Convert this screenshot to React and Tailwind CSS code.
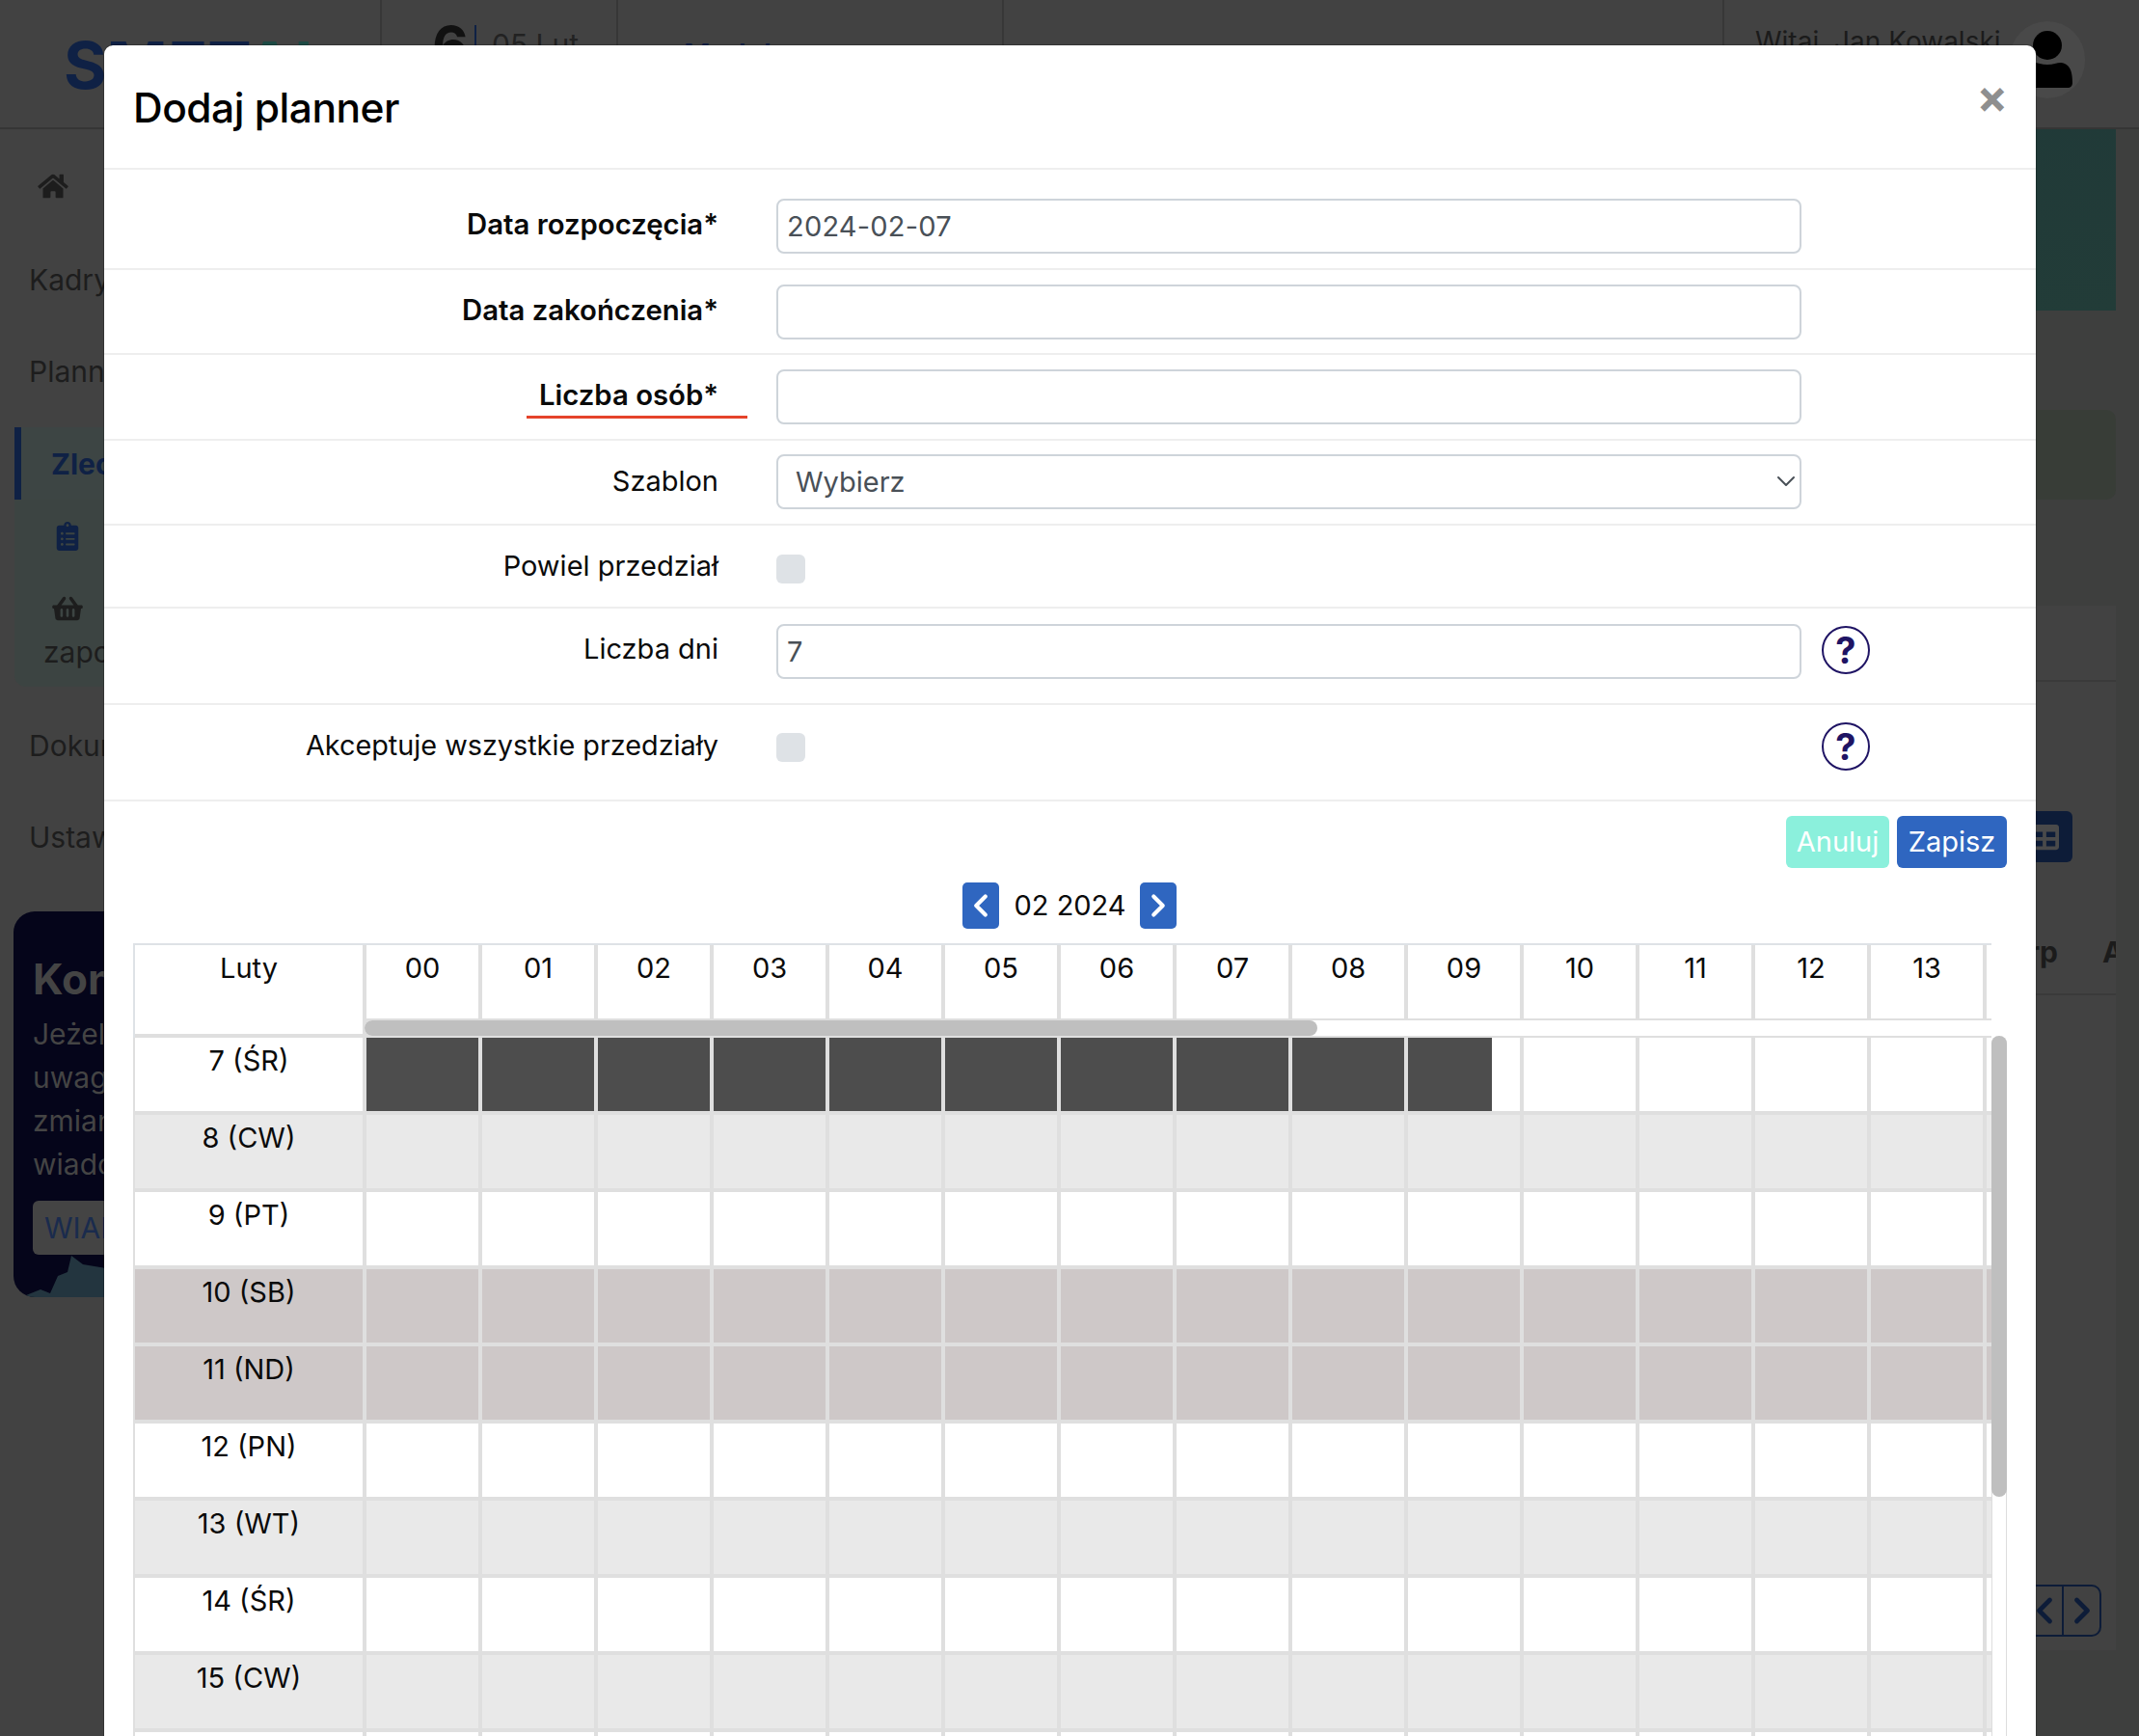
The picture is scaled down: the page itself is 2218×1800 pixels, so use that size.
import { FaHome, FaClipboardList, FaShoppingBasket, FaTable } from 'react-icons/fa';
import { FiChevronDown, FiChevronLeft, FiChevronRight } from 'react-icons/fi';

const HOURS = ['00', '01', '02', '03', '04', '05', '06', '07', '08', '09', '10', '11', '12', '13', '14'];

const DAYS = [
  { label: '7 (ŚR)', bg: 'bg-white', busy: true },
  { label: '8 (CW)', bg: 'bg-[#e9e9e9]' },
  { label: '9 (PT)', bg: 'bg-white' },
  { label: '10 (SB)', bg: 'bg-[#cec8c8]' },
  { label: '11 (ND)', bg: 'bg-[#cec8c8]' },
  { label: '12 (PN)', bg: 'bg-white' },
  { label: '13 (WT)', bg: 'bg-[#e9e9e9]' },
  { label: '14 (ŚR)', bg: 'bg-white' },
  { label: '15 (CW)', bg: 'bg-[#e9e9e9]' },
  { label: '16 (PT)', bg: 'bg-white' },
];

const Header = () => (
  <div className="flex h-[134px] shrink-0 border-b-2 border-[#353535] bg-[#424242]">
    <div className="w-[396px] shrink-0 border-r-2 border-[#373737] pl-[66px] pt-[27px] text-[68px] font-bold leading-[80px] text-[#0f2145]">
      S<span>MET</span><span className="text-[#1d4a44]">AL</span>
    </div>
    <div className="flex w-[245px] shrink-0 items-start border-r-2 border-[#373737] pl-[52px] pt-[10px]">
      <span className="w-[34px] text-[58px] font-bold leading-[76px] text-[#111111]">6</span>
      <div className="ml-[10px] mt-[16px] h-[60px] w-[2px] bg-[#0f2145]" />
      <span className="ml-[16px] mt-[18px] text-[30px] leading-[36px] text-[#222222]">05 Lut</span>
    </div>
    <div className="w-[400px] shrink-0 border-r-2 border-[#373737] pl-[68px] pt-[38px] text-[30px] font-semibold leading-[36px] text-[#0f2145]">
      Moduł
    </div>
    <div className="flex-1 border-r-2 border-[#373737]" />
    <div className="flex w-[430px] shrink-0 items-start pl-[32px] pt-[22px]">
      <span className="mt-[3px] w-[248px] shrink-0 whitespace-nowrap text-[28px] leading-[36px] text-[#1b1b1b]">Witaj, Jan Kowalski</span>
      <div className="ml-[16px] flex h-[80px] w-[78px] shrink-0 items-center justify-center rounded-full bg-[#494949]">
        <svg width="56" height="64" viewBox="0 0 56 64">
          <ellipse cx="28" cy="17" rx="15" ry="15" fill="#000" />
          <path d="M10 36c5-3 10 1 18 1s13-4 18-1c6 3 8 9 8 20 0 3-2 5-5 5H7c-3 0-5-2-5-5 0-11 2-17 8-20z" fill="#000" />
        </svg>
      </div>
    </div>
  </div>
);

const Sidebar = () => (
  <div className="w-[396px] shrink-0 bg-[#424242] text-[30px] text-[#1d1d1d]">
    <div className="flex h-[118px] items-center pl-[38px]">
      <FaHome className="h-[28px] w-[34px]" />
    </div>
    <div className="h-[96px] pl-[30px] pt-[18px] leading-[40px]">Kadry</div>
    <div className="h-[95px] pl-[30px] pt-[17px] leading-[40px]">Planner</div>
    <div className="ml-[15px] h-[75px] border-l-[7px] border-[#0f2145] bg-[#3d4544] pl-[31px] pt-[18px] font-bold leading-[40px] text-[#0f2145]">
      Zlecenia
    </div>
    <div className="ml-[15px] h-[194px] rounded-bl-[12px] bg-[#3c4442]">
      <FaClipboardList className="ml-[42px] pt-[23px] h-[53px] w-[26px] text-[#0f2145]" />
      <FaShoppingBasket className="ml-[37px] mt-[46px] h-[28px] w-[36px]" />
      <div className="ml-[30px] mt-[11px] leading-[40px]">zapotrzebowanie</div>
    </div>
    <div className="h-[96px] pl-[30px] pt-[41px] leading-[40px]">Dokumenty</div>
    <div className="h-[96px] pl-[30px] pt-[40px] leading-[40px]">Ustawienia</div>
    <div className="relative ml-[14px] mr-[30px] mt-[41px] h-[400px] overflow-hidden rounded-[22px] bg-[#05051a] pl-[20px] pt-[44px] text-[#444444]">
      <svg className="absolute bottom-0 left-0" width="120" height="50" viewBox="0 0 120 50">
        <path d="M8 50L28 42L38 46L46 28L56 24L60 7L72 16L96 20L120 22V50Z" fill="#23353f" />
      </svg>
      <div className="text-[44px] font-bold leading-[52px]">Kontakt</div>
      <div className="mt-[9px] leading-[45px]">Jeżeli</div>
      <div className="leading-[45px]">uwagi</div>
      <div className="leading-[45px]">zmiany</div>
      <div className="leading-[45px]">wiadomość</div>
      <div className="relative mt-[15px] flex h-[56px] w-[200px] items-center rounded-[6px] bg-[#444444] pl-[12px] text-[#1a2b4d]">
        WIADOMOŚĆ
      </div>
    </div>
  </div>
);

const Main = () => (
  <div className="flex flex-1 flex-col bg-[#3e3f3e] pr-[24px]">
    <div className="h-[188px] bg-gradient-to-br from-[#1f3838] to-[#223c38]" />
    <div className="mt-[103px] h-[93px] rounded-[10px] bg-[#383d37]" />
    <div className="mt-[110px] h-[1083px] overflow-hidden bg-[#424242]">
      <div className="h-[79px] border-b-2 border-[#3a3a3a]" />
      <div className="relative h-[325px] border-b-2 border-[#3a3a3a] pt-[134px]">
        <div className="ml-auto mr-[45px] flex h-[53px] w-[60px] items-center justify-end rounded-[6px] bg-[#0d1c38] pr-[12px]">
          <FaTable className="h-[30px] w-[34px] text-[#4a4a4a]" />
        </div>
        <div className="mt-[73px] flex justify-end pr-[60px] text-[30px] font-bold leading-[40px] text-[#1b1b1b]">
          Grp
          <span className="ml-[46px] -mr-[60px] w-[14px] overflow-hidden">Akcja</span>
        </div>
      </div>
      <div className="flex h-[679px] flex-col justify-end pb-[14px]">
        <div className="ml-auto mr-[15px] flex h-[54px] w-[80px] rounded-r-[10px] border-2 border-[#0d1c38] text-[#0d1c38]">
          <div className="flex w-[39px] min-w-0 shrink-0 items-center justify-center border-r-2 border-[#0d1c38]">
            <FiChevronLeft className="h-[44px] w-[44px] shrink-0" strokeWidth={2.6} />
          </div>
          <div className="flex w-[37px] min-w-0 shrink-0 items-center justify-center">
            <FiChevronRight className="h-[44px] w-[44px] shrink-0" strokeWidth={2.6} />
          </div>
        </div>
      </div>
    </div>
  </div>
);

const HelpIcon = () => (
  <div className="ml-[21px] flex h-[50px] w-[50px] shrink-0 items-center justify-center rounded-full border-2 border-[#1f1464] text-[38px] font-bold leading-none text-[#1f1464]">
    ?
  </div>
);

const FieldRow = ({ label, bold, rowClass, labelClass, children }) => (
  <div className={`flex items-start border-b-2 border-[#eeeeee] ${rowClass}`}>
    <div className={`w-[697px] shrink-0 pr-[60px] text-right leading-[40px] text-[#0a0a0a] ${labelClass} ${bold ? 'text-[29.3px] font-semibold' : 'text-[29px]'}`}>
      {label}
    </div>
    {children}
  </div>
);

const TextInput = ({ value }) => (
  <input
    readOnly
    value={value}
    className="h-[57px] w-[1063px] rounded-[8px] border-2 border-[#ced4da] bg-white px-[9px] text-[29px] tracking-[0.2px] text-[#495057]"
  />
);

const CheckBox = () => (
  <input type="checkbox" disabled className="h-[30px] w-[30px] appearance-none rounded-[6px] bg-[#dee2e6]" />
);

const Schedule = () => (
  <div className="flex h-[900px] pl-[30px] pr-[30px] text-center text-[29px] text-[#0a0a0a]">
    <div className="w-[1927px] shrink-0 overflow-hidden bg-[#dfdfdf]">
      <div className="flex h-[98px] border-l-2 border-t-2 border-[#dee2e6]">
        <div className="h-[92px] w-[236px] shrink-0 bg-white leading-[48px]">Luty</div>
        <div className="relative ml-[2px] flex-1">
          <div className="flex gap-[4px] pl-[2px]">
            {HOURS.map((h) => (
              <div key={h} className="h-[76px] w-[116px] shrink-0 bg-white leading-[48px]">{h}</div>
            ))}
          </div>
          <div className="mt-[2px] h-[16px] rounded-full bg-white">
            <div className="h-[16px] w-[988px] rounded-full bg-[#bfbfbf]" />
          </div>
        </div>
      </div>
      <div className="flex flex-col gap-[4px] border-l-2 border-[#dfdfdf]">
        {DAYS.map((day) => (
          <div key={day.label} className="flex gap-[4px]">
            <div className={`h-[76px] w-[236px] shrink-0 leading-[48px] ${day.bg}`}>{day.label}</div>
            {HOURS.map((h, i) => (
              <div key={h} className={`h-[76px] w-[116px] shrink-0 ${day.bg}`}>
                {day.busy && i < 9 && <div className="h-full bg-[#4d4d4d]" />}
                {day.busy && i === 9 && <div className="h-full w-[87px] bg-[#4d4d4d]" />}
              </div>
            ))}
          </div>
        ))}
      </div>
    </div>
    <div className="mt-[96px] h-[800px] w-[16px] shrink-0 rounded-full border-x border-[#dddddd] bg-white">
      <div className="-mx-px h-[478px] rounded-full bg-[#bfbfbf]" />
    </div>
  </div>
);

const PlannerModal = () => (
  <div className="absolute left-[107px] top-[46px] w-[2005px] rounded-t-[10px] border border-black/20 bg-white bg-clip-padding">
    <div className="relative h-[129px] border-b-2 border-[#eeeeee] pl-[30px] pt-[41px]">
      <h2 className="text-[42.5px] font-medium leading-[48px] tracking-[-0.5px] text-black">Dodaj planner</h2>
      <button className="absolute right-[29px] top-[26px] text-[48px] font-bold leading-[54px] text-[#8f8f8f]">×</button>
    </div>

    <FieldRow label="Data rozpoczęcia*" bold rowClass="h-[104px] pt-[30px]" labelClass="mt-[7px]">
      <TextInput value="2024-02-07" />
    </FieldRow>
    <FieldRow label="Data zakończenia*" bold rowClass="h-[88px] pt-[15px]" labelClass="mt-[7px]">
      <TextInput value="" />
    </FieldRow>
    <div className="flex h-[89px] items-start border-b-2 border-[#eeeeee] pt-[15px]">
      <div className="flex w-[697px] shrink-0 justify-end pr-[30px]">
        <div className="mt-[7px] h-[44px] w-[229px] border-b-[3px] border-[#e5432a] pr-[30px] text-right text-[29.3px] font-semibold leading-[40px] text-[#0a0a0a]">
          Liczba osób*
        </div>
      </div>
      <TextInput value="" />
    </div>
    <FieldRow label="Szablon" rowClass="h-[88px] pt-[14px]" labelClass="mt-[8px]">
      <div className="relative">
        <select className="h-[57px] w-[1063px] appearance-none rounded-[8px] border-2 border-[#ced4da] bg-white pl-[18px] text-[29px] text-[#495057]">
          <option>Wybierz</option>
        </select>
        <FiChevronDown className="absolute right-0 top-[12px] h-[32px] w-[32px] text-[#495057]" strokeWidth={1.5} />
      </div>
    </FieldRow>
    <FieldRow label="Powiel przedział" rowClass="h-[86px] pt-[30px]" labelClass="mt-[-8px]">
      <CheckBox />
    </FieldRow>
    <FieldRow label="Liczba dni" rowClass="h-[100px] pt-[16px]" labelClass="mt-[6px]">
      <TextInput value="7" />
      <div className="mt-[2px]">
        <HelpIcon />
      </div>
    </FieldRow>
    <div className="flex h-[100px] items-start border-b-2 border-[#eeeeee] pt-[18px]">
      <div className="mt-[4px] w-[697px] shrink-0 pr-[60px] text-right text-[28.8px] leading-[40px] text-[#0a0a0a]">
        Akceptuje wszystkie przedziały
      </div>
      <div className="mt-[11px] w-[1063px] shrink-0 leading-none">
        <CheckBox />
      </div>
      <HelpIcon />
    </div>

    <div className="flex justify-end gap-[8px] pr-[30px] pt-[15px]">
      <button className="h-[54px] w-[107px] rounded-[6px] bg-[#8bf0dc] text-[29px] text-white">Anuluj</button>
      <button className="h-[54px] w-[114px] rounded-[6px] bg-[#2f66c0] text-[29px] text-white">Zapisz</button>
    </div>

    <div className="mb-[15px] mt-[15px] flex items-center justify-center pr-[2px] text-[29px] text-[#0a0a0a]">
      <button className="flex h-[48px] w-[38px] items-center justify-center rounded-[5px] bg-[#2f66c0] text-white">
        <FiChevronLeft className="h-[38px] w-[38px] shrink-0" strokeWidth={2.6} />
      </button>
      <span className="mx-[16px] w-[114px] whitespace-nowrap text-center leading-[48px]">02 2024</span>
      <button className="flex h-[48px] w-[38px] items-center justify-center rounded-[5px] bg-[#2f66c0] text-white">
        <FiChevronRight className="h-[38px] w-[38px] shrink-0" strokeWidth={2.6} />
      </button>
    </div>

    <Schedule />
  </div>
);

export default function App() {
  return (
    <div className="relative flex h-[1800px] w-[2218px] flex-col overflow-hidden bg-[#3e3f3e] [font-family:Inter,sans-serif]">
      <Header />
      <div className="flex flex-1">
        <Sidebar />
        <Main />
      </div>
      <PlannerModal />
    </div>
  );
}
